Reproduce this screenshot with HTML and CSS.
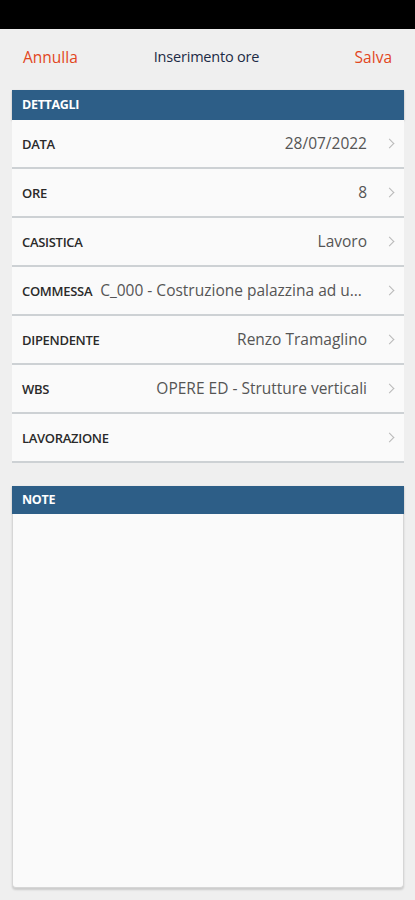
FILE: index.html
```html
<!DOCTYPE html>
<html lang="it">
<head>
    <meta charset="UTF-8">
    <meta name="viewport" content="width=device-width, initial-scale=1.0">
    <title>Inserimento ore</title>
    <link rel="stylesheet" href="styles.css">
</head>
<body>
    <div class="statusbar"></div>
    <header class="topbar">
        <a class="action" href="#">Annulla</a>
        <span class="title">Inserimento ore</span>
        <a class="action save" href="#">Salva</a>
    </header>
    <main>
        <section class="card">
            <h2 class="card-head">DETTAGLI</h2>
            <ul class="fields">
                <li><span class="label">DATA</span><span class="value">28/07/2022</span><span class="chev"></span></li>
                <li><span class="label">ORE</span><span class="value">8</span><span class="chev"></span></li>
                <li><span class="label">CASISTICA</span><span class="value">Lavoro</span><span class="chev"></span></li>
                <li><span class="label">COMMESSA</span><span class="value">C_000 - Costruzione palazzina ad uso uffici</span><span class="chev"></span></li>
                <li><span class="label">DIPENDENTE</span><span class="value">Renzo Tramaglino</span><span class="chev"></span></li>
                <li><span class="label">WBS</span><span class="value">OPERE ED - Strutture verticali</span><span class="chev"></span></li>
                <li><span class="label">LAVORAZIONE</span><span class="value"></span><span class="chev"></span></li>
            </ul>
        </section>
        <section class="card note">
            <h2 class="card-head">NOTE</h2>
            <div class="note-box"></div>
        </section>
    </main>
</body>
</html>
```

FILE: styles.css
```css
body {
    font-family: "Open Sans", Arial, sans-serif;
    margin: 0;
    padding: 0;
    background-color: #efefef;
    width: 415px;
    height: 900px;
    overflow: hidden;
}
.statusbar {
    height: 29px;
    background-color: #000;
}
.topbar {
    height: 61px;
    display: flex;
    align-items: center;
    padding: 0 23px;
    box-sizing: border-box;
}
.topbar .action {
    color: #e2461d;
    text-decoration: none;
    font-size: 15.5px;
    margin-top: -6px;
}
.topbar .save {
    margin-left: auto;
}
.topbar .title {
    color: #1d2b45;
    font-size: 14.5px;
    margin-top: -6px;
    margin-left: 76px;
    letter-spacing: -0.2px;
}
main {
    padding: 0 11px 0 12px;
}
.card-head {
    margin: 0;
    height: 30px;
    line-height: 30px;
    padding: 0 10px;
    background-color: #2d5e87;
    color: #fff;
    font-size: 12.5px;
    font-weight: 700;
    letter-spacing: -0.3px;
    box-shadow: 0 1px 2px rgba(0,0,0,0.25);
}
.note .card-head {
    height: 28px;
    line-height: 28px;
}
.fields {
    list-style-type: none;
    margin: 0;
    padding: 0;
}
.fields li {
    display: flex;
    align-items: center;
    height: 47px;
    padding: 0 10px;
    background-color: #fafafa;
    border-bottom: 2px solid #cdd1d4;
}
.fields .label {
    font-size: 13px;
    font-weight: 600;
    color: #2a2a2a;
    letter-spacing: -0.3px;
    white-space: nowrap;
    margin-right: 8px;
}
.fields .value {
    flex: 1;
    text-align: right;
    font-size: 15.5px;
    color: #555;
    white-space: nowrap;
    overflow: hidden;
    text-overflow: ellipsis;
    padding-bottom: 2px;
}
.chev {
    width: 6px;
    height: 6px;
    border-top: 1.5px solid #b8b8b8;
    border-right: 1.5px solid #b8b8b8;
    transform: rotate(45deg);
    margin: 0 1px 0 19px;
    flex-shrink: 0;
}
.note {
    margin-top: 23px;
}
.note-box {
    height: 373px;
    background-color: #fafafa;
    border: 1px solid #d6d6d6;
    border-top: none;
    border-radius: 0 0 4px 4px;
    box-shadow: 0 2px 2px rgba(0,0,0,0.15);
}
```
